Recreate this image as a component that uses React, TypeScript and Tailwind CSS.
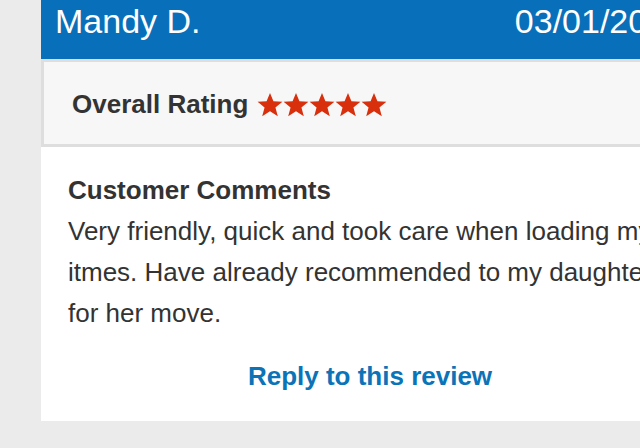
import React from 'react';

const Star = () => (
  <svg width="26" height="26" viewBox="1 1 22 22" className="block">
    <path
      d="M12 1.8l2.9 7.1 7.6.4-5.9 4.8 2 7.4L12 17.3l-6.6 4.2 2-7.4-5.9-4.8 7.6-.4z"
      fill="#d8300c"
    />
  </svg>
);

export default function App() {
  const review = {
    name: 'Mandy D.',
    date: '03/01/2019',
    comment:
      'Very friendly, quick and took care when loading my itmes. Have already recommended to my daughter for her move.',
  };

  return (
    <div
      className="w-[640px] h-[448px] overflow-hidden bg-[#ebebeb] pl-[41px]"
      style={{ fontFamily: '"Liberation Sans", Arial, sans-serif' }}
    >
      <div className="w-[658px] bg-white">
        {/* header */}
        <div className="h-[59px] bg-[#0870ba] flex justify-between pl-[14px] pr-[14px] pt-[4px] text-white text-[34px] leading-[34px]">
          <span>{review.name}</span>
          <span>{review.date}</span>
        </div>

        {/* rating */}
        <div className="h-[88px] border-[3px] border-[#dedede] bg-[#f7f7f7] flex items-center pl-[28px] pt-[3px]">
          <span className="font-bold text-[26px] text-[#333] mr-[9px]">Overall Rating</span>
          <div className="flex">
            <Star />
            <Star />
            <Star />
            <Star />
            <Star />
          </div>
        </div>

        {/* comments */}
        <div className="pt-[23px] pb-[24px] px-[27px] text-[26px] leading-[41px] text-[#333]">
          <h2 className="font-bold">Customer Comments</h2>
          <p>{review.comment}</p>
          <div className="mt-[22px] text-center">
            <a className="font-bold text-[#0b73b7] cursor-pointer">Reply to this review</a>
          </div>
        </div>
      </div>
    </div>
  );
}
